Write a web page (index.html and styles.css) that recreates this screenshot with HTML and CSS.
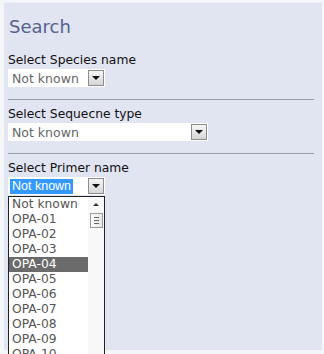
FILE: index.html
```html
<!DOCTYPE html>
<html lang="en">
<head>
  <meta charset="UTF-8" />
  <title>Search</title>
  <link rel="stylesheet" href="styles.css">
</head>
<body>
  <div class="panel">
    <h1>Search</h1>

    <label class="label">Select Species name</label>
    <div class="select small">
      <span class="value">Not known</span>
      <span class="arrow"></span>
    </div>

    <hr>

    <label class="label">Select Sequecne type</label>
    <div class="select wide">
      <span class="value">Not known</span>
      <span class="arrow"></span>
    </div>

    <hr>

    <label class="label">Select Primer name</label>
    <div class="select small open">
      <span class="value picked">Not known</span>
      <span class="arrow"></span>

      <div class="list">
        <ul class="options">
          <li>Not known</li>
          <li>OPA-01</li>
          <li>OPA-02</li>
          <li>OPA-03</li>
          <li class="hover">OPA-04</li>
          <li>OPA-05</li>
          <li>OPA-06</li>
          <li>OPA-07</li>
          <li>OPA-08</li>
          <li>OPA-09</li>
          <li>OPA-10</li>
          <li>OPA-11</li>
        </ul>
        <div class="scroll">
          <span class="up"></span>
          <span class="thumb"><i></i><i></i><i></i></span>
        </div>
      </div>
    </div>
  </div>
</body>
</html>
```

FILE: styles.css
```css
* {
  box-sizing: border-box;
}

body {
  margin: 0;
  height: 354px;
  overflow: hidden;
  background: #f5f6f9;
  font-family: 'DejaVu Sans', Verdana, sans-serif;
  color: #111;
}

.panel {
  margin: 2px 2px 0 4px;
  height: 348px;
  padding: 0 8px 0 4px;
  background: #e1e4f1;
  border-top: 1px solid #eef0f7;
}

h1 {
  margin: 13px 0 0 1px;
  font-size: 18px;
  font-weight: normal;
  line-height: 22px;
  color: #56638e;
}

.label {
  display: block;
  margin-top: 15px;
  font-size: 12.3px;
  line-height: 15px;
}

hr {
  margin: 12px 0 0 0;
  border: none;
  border-top: 1px solid #9a9ca4;
  height: 0;
}

hr + .label {
  margin-top: 7px;
}

.select {
  position: relative;
  display: flex;
  align-items: center;
  justify-content: space-between;
  margin-top: 1px;
  height: 18px;
  background: #fff;
  padding: 0 1px 0 4px;
}

.select.small {
  width: 97px;
}

.select.wide {
  width: 200px;
}

.value {
  font-size: 12.5px;
  color: #666;
  line-height: 15px;
}

.value.picked {
  margin-left: -2px;
  padding: 0 2px;
  font-family: 'Liberation Sans', Arial, sans-serif;
  background: #3399ff;
  color: #fff;
}

.arrow {
  position: relative;
  width: 16px;
  height: 16px;
  border: 1px solid #8c8c8c;
  background: linear-gradient(#f6f6f6, #d6d6d6);
}

.arrow::after {
  content: "";
  position: absolute;
  left: 3px;
  top: 5px;
  border-left: 4px solid transparent;
  border-right: 4px solid transparent;
  border-top: 4px solid #111;
}

.list {
  position: absolute;
  left: 0;
  top: 19px;
  width: 97px;
  height: 175px;
  display: flex;
  background: #fff;
  border: 1px solid #222;
  overflow: hidden;
}

.options {
  flex: 1;
  margin: 0;
  padding: 0;
  list-style: none;
}

.options li {
  height: 15px;
  padding-left: 3px;
  font-size: 12.3px;
  line-height: 15px;
  color: #555;
}

.options li.hover {
  background: #6b6b6b;
  color: #fff;
}

.scroll {
  display: flex;
  flex-direction: column;
  align-items: center;
  width: 16px;
  background: #f8f8f8;
}

.up {
  position: relative;
  width: 14px;
  height: 16px;
}

.up::after {
  content: "";
  position: absolute;
  left: 4px;
  top: 6px;
  border-left: 3px solid transparent;
  border-right: 3px solid transparent;
  border-bottom: 3px solid #333;
}

.thumb {
  display: flex;
  flex-direction: column;
  justify-content: center;
  gap: 2px;
  width: 13px;
  height: 15px;
  border: 1px solid #9a9a9a;
  background: linear-gradient(90deg, #fdfdfd, #e6e6e6);
  padding: 0 3px;
}

.thumb i {
  display: block;
  height: 1px;
  background: #666;
}
```
